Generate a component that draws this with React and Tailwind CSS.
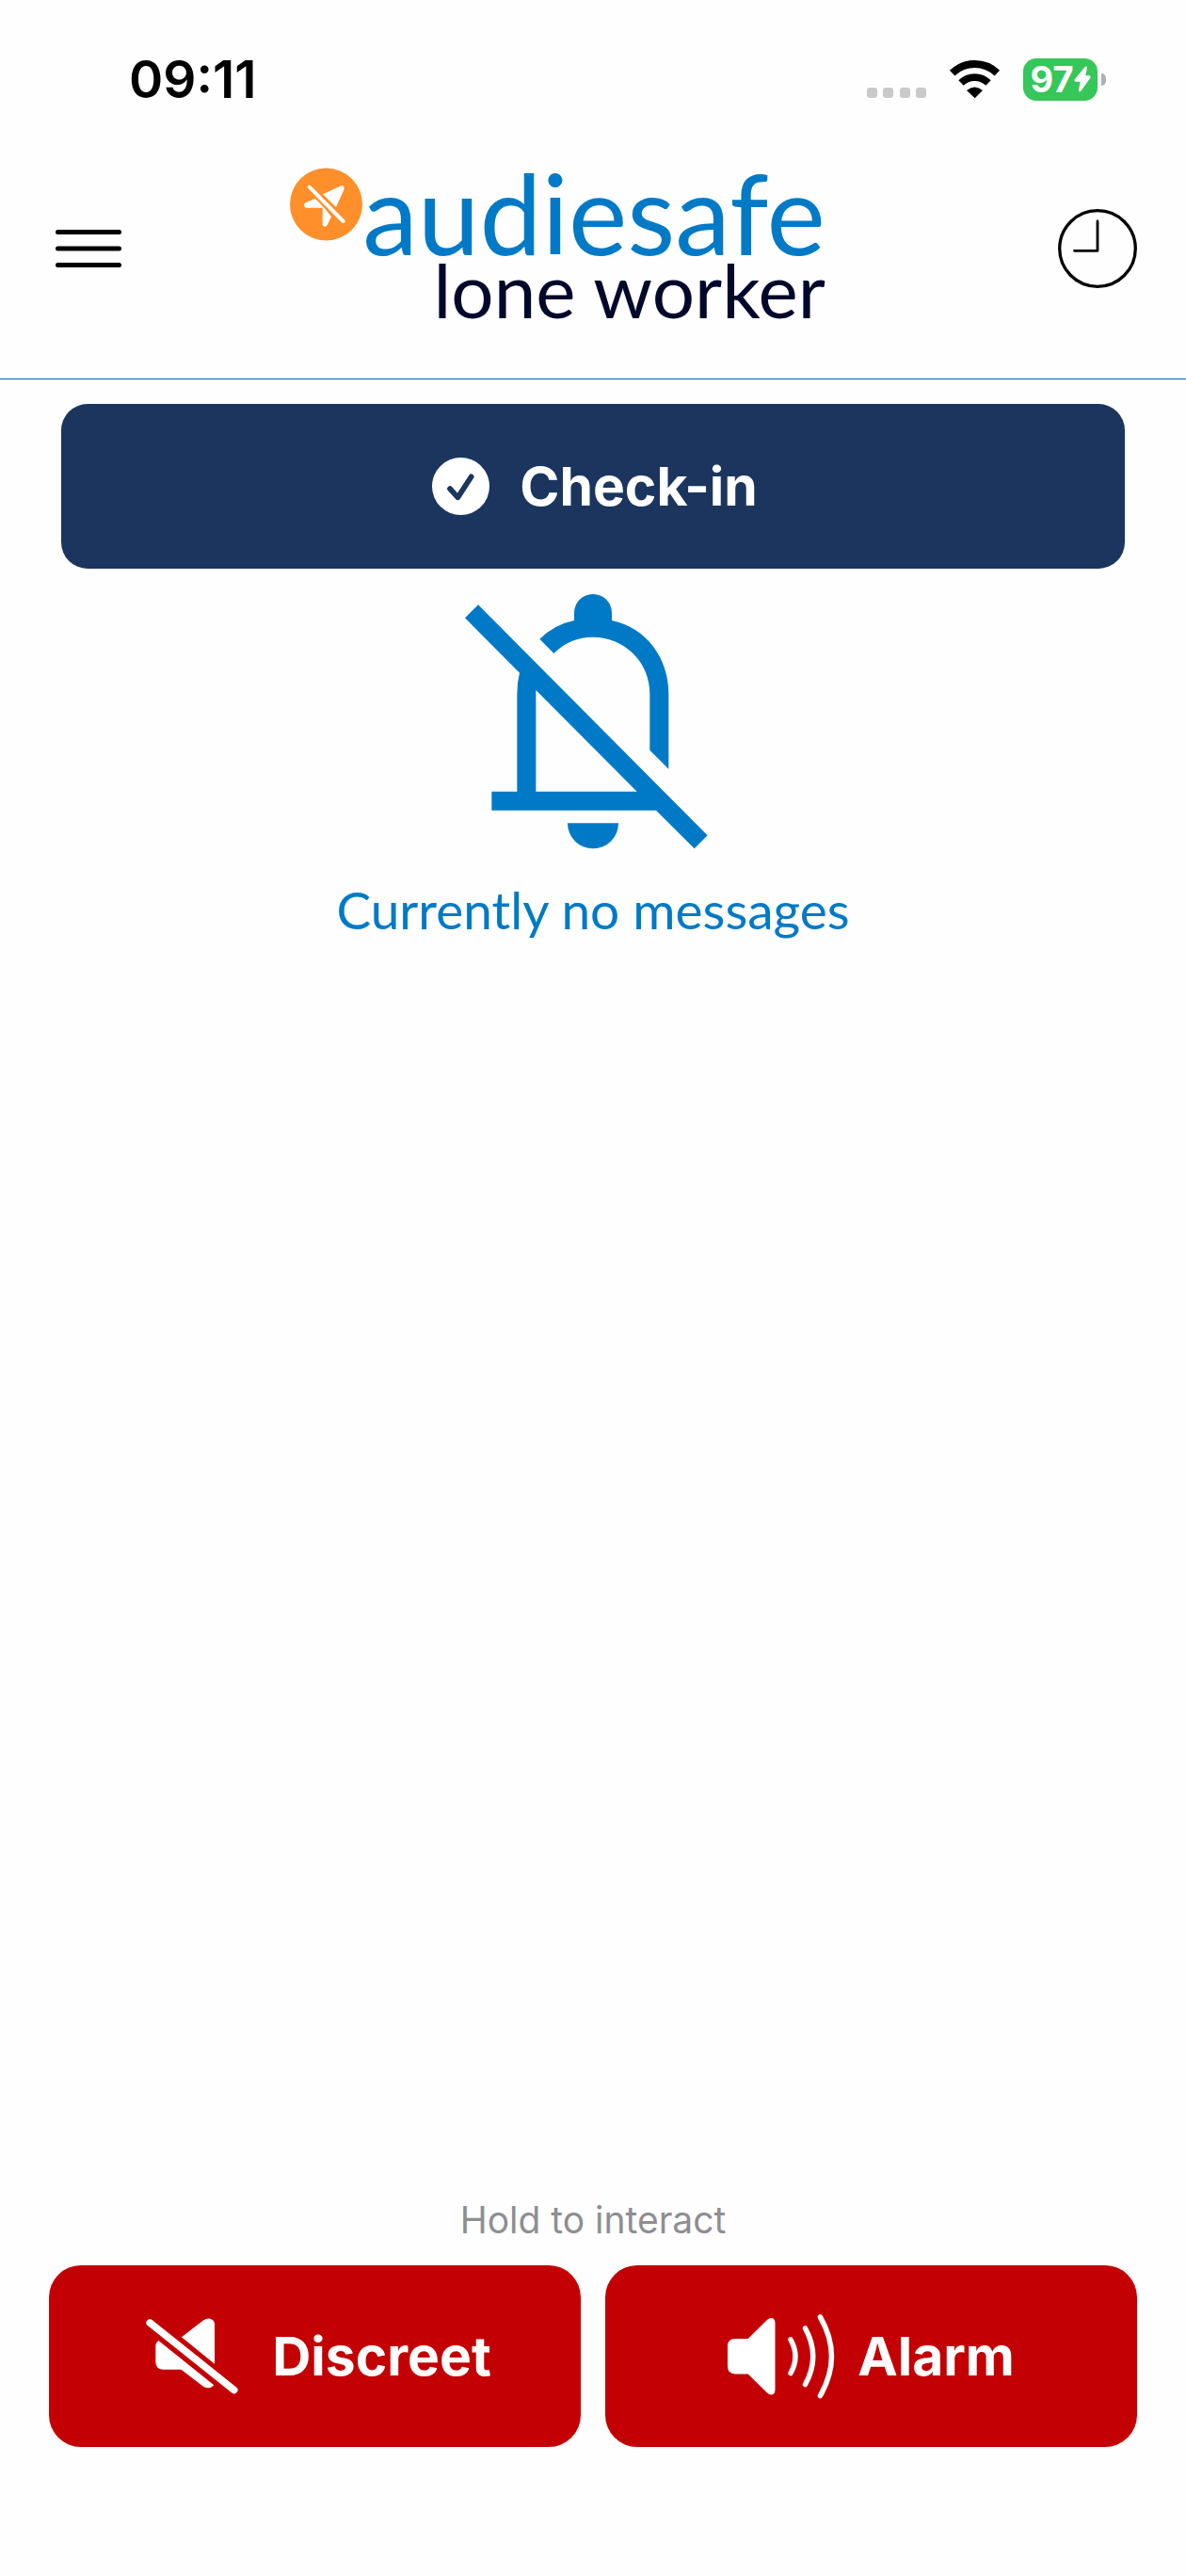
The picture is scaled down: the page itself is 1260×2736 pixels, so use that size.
import React from 'react';

function SignalDots() {
  return (
    <svg width="63" height="41" viewBox="0 0 63 41" fill="#c9c9c9" aria-hidden="true">
      {[0, 17, 35, 52].map((x) => (
        <rect key={x} x={x} y="29" width="11" height="11" rx="3.2" />
      ))}
    </svg>
  );
}

function WifiIcon() {
  return (
    <svg width="55" height="41" viewBox="0 0 165 123" aria-hidden="true">
      <path d="M11 41 A103 103 0 0 1 154 41" fill="none" stroke="#000" strokeWidth="24" />
      <path d="M39 72 A62 62 0 0 1 126 72" fill="none" stroke="#000" strokeWidth="23" />
      <path d="M57 96 Q82 75 108 96 L83 121 Z" />
    </svg>
  );
}

function Battery() {
  return (
    <div className="flex items-center gap-1">
      <div className="flex h-[45px] w-[79px] items-center justify-center rounded-[14px] bg-[#35c759] text-white">
        <span className="text-[38px] leading-none font-bold">97</span>
        <svg width="18" height="28" viewBox="0 0 54 84" fill="currentColor" aria-hidden="true">
          <path d="M35 3 Q41 -1 42 5 L37 31 H49 Q55 33 52 38 L22 80 Q15 86 15 77 L20 50 H5 Q-1 48 3 42 Z" />
        </svg>
      </div>
      <div className="h-[13px] w-[5px] rounded-r-full bg-[#b0b0b0]" />
    </div>
  );
}

function MenuIcon() {
  return (
    <svg width="70" height="42" viewBox="0 0 70 42" stroke="#000" strokeWidth="5" strokeLinecap="round" aria-hidden="true">
      <path d="M2.5 3.5h65M2.5 21h65M2.5 38.5h65" />
    </svg>
  );
}

function ClockIcon() {
  return (
    <svg width="84" height="84" viewBox="0 0 84 84" fill="none" stroke="#000" aria-hidden="true">
      <circle cx="42" cy="42" r="40.3" strokeWidth="3.3" />
      <path d="M42 13v31.3H17.5" strokeWidth="2.8" strokeLinecap="round" strokeLinejoin="round" />
    </svg>
  );
}

// Location arrow with a slash through it
function LocationOffBadge() {
  return (
    <svg className="shrink-0" width="77" height="78" viewBox="0 0 231 234" aria-hidden="true">
      <circle cx="115.5" cy="117" r="115.5" fill="#fe8f2a" />
      <path
        d="M105 85 L160 59 Q176 54 172 71 L147 126 Z M82 98 L103 120 L103 128 H50 Q39 120 50 112 Z M103 120 L132 156 L119 183 Q111 193 104 183 V128 Z"
        fill="#fff"
      />
      <path d="M67 67 L169 171" stroke="#fe8f2a" strokeWidth="24" />
      <path d="M62 62 L170 171" stroke="#fff" strokeWidth="12" strokeLinecap="round" />
    </svg>
  );
}

function CheckIcon() {
  return (
    <svg width="61" height="61" viewBox="0 0 183 183" aria-hidden="true">
      <circle cx="91.5" cy="91.5" r="91.5" fill="#fff" />
      <path d="M57 99 L82 127 L125 61" fill="none" stroke="#1b355e" strokeWidth="17" strokeLinecap="round" strokeLinejoin="round" />
    </svg>
  );
}

function BellOffIcon() {
  return (
    <svg width="320" height="272" viewBox="0 60 960 816" fill="#007ac6" aria-hidden="true">
      <path d="M310 206 Q357 160 420 147 V123 A60 60 0 0 1 540 123 V147 C650 170 721 267 721 380 V620 L661 560 V380 C661 280 581 200 480 200 Q407 200 355 252 Z" />
      <path
        fillRule="evenodd"
        d="M114 97 L845 832 L803 874 L681 752 H157 V692 H238 V380 Q238 345 246 314 L72 139 Z M298 369 V692 H620 Z"
      />
      <path d="M399 793 H561 A81 81 0 0 1 399 793 Z" />
    </svg>
  );
}

function SpeakerOffIcon() {
  return (
    <svg width="98" height="81" viewBox="0 0 98 81" fill="#fff" aria-hidden="true">
      <path d="M37.9 20.3 L61 2.5 Q66 -1 70 1.5 Q73 3 73 7 V48.7 Z" />
      <path d="M13.4 24 Q10.3 26 10.3 30 V46 Q10.3 54.7 19 54.7 H37.5 L60 72 Q67 77 72.3 71.3 Z" />
      <path d="M4.2 5 L93.7 76.5" stroke="#fff" strokeWidth="7.6" strokeLinecap="round" />
    </svg>
  );
}

function SpeakerIcon() {
  return (
    <svg width="114" height="90" viewBox="0 0 114 90" fill="#fff" aria-hidden="true">
      <path d="M8 26 H21.7 L42 6 Q46 2.5 49 5 Q50.5 6 50.5 9 V80 Q50.5 83 49 84.5 Q46 87 42 83.5 L21.7 63.4 H8 Q0 63.4 0 55 V34 Q0 26 8 26 Z" />
      <path
        d="M67 27 Q77 44.7 67 62.5 M82.5 15 Q99 44.7 82.5 74.5 M98.4 3 Q122.5 44.7 98.4 86.5"
        fill="none"
        stroke="#fff"
        strokeWidth="5.5"
        strokeLinecap="round"
      />
    </svg>
  );
}

const actions = [
  { label: 'Discreet', Icon: SpeakerOffIcon, spacing: 'gap-9 pl-2' },
  { label: 'Alarm', Icon: SpeakerIcon, spacing: 'gap-6' },
];

export default function App() {
  return (
    <div className="flex min-h-screen flex-col bg-[#fefefe] font-['Inter',sans-serif]">
      {/* Status bar */}
      <div className="flex h-[126px] items-center justify-between pt-[42px] pr-[85px] pl-[137px]">
        <span className="text-[55px] leading-none font-semibold text-black">09:11</span>
        <div className="flex items-center gap-6">
          <SignalDots />
          <WifiIcon />
          <Battery />
        </div>
      </div>

      {/* Header */}
      <header className="flex h-[277px] items-center justify-between border-b border-[#0069a8] pr-[52px] pl-[59px]">
        <button type="button" aria-label="Menu">
          <MenuIcon />
        </button>
        <h1 className="flex items-start pr-[68px] pb-[10px] font-['Lato',sans-serif] font-normal">
          <LocationOffBadge />
          <span className="flex flex-col items-end">
            <span className="text-[118px] leading-[96px] text-[#007ac6]">audiesafe</span>
            <span className="text-[80px] leading-[66px] text-[#00082b]">lone worker</span>
          </span>
        </h1>
        <button type="button" aria-label="History">
          <ClockIcon />
        </button>
      </header>

      <main className="flex flex-1 flex-col pt-[26px]">
        <div className="px-[65px]">
          <button
            type="button"
            className="flex h-[175px] w-full items-center justify-center gap-8 rounded-[28px] bg-[#1b355e] pl-1 text-[57px] font-bold text-white"
          >
            <CheckIcon />
            Check-in
          </button>
        </div>

        {/* Empty state */}
        <div className="mt-[26px] flex flex-col items-center">
          <BellOffIcon />
          <p className="mt-8 font-['Lato',sans-serif] text-[55px] leading-[64px] text-[#007ac6]">Currently no messages</p>
        </div>

        {/* Emergency actions */}
        <div className="mt-auto px-[52px] pb-[137px]">
          <p className="mb-6 text-center text-[39px] leading-[48px] text-[#8e8e93]">Hold to interact</p>
          <div className="grid grid-cols-2 gap-[26px]">
            {actions.map(({ label, Icon, spacing }) => (
              <button
                key={label}
                type="button"
                className={`flex h-[193px] items-center justify-center rounded-[34px] bg-[#c30003] text-[57px] font-bold text-white ${spacing}`}
              >
                <Icon />
                {label}
              </button>
            ))}
          </div>
        </div>
      </main>
    </div>
  );
}
